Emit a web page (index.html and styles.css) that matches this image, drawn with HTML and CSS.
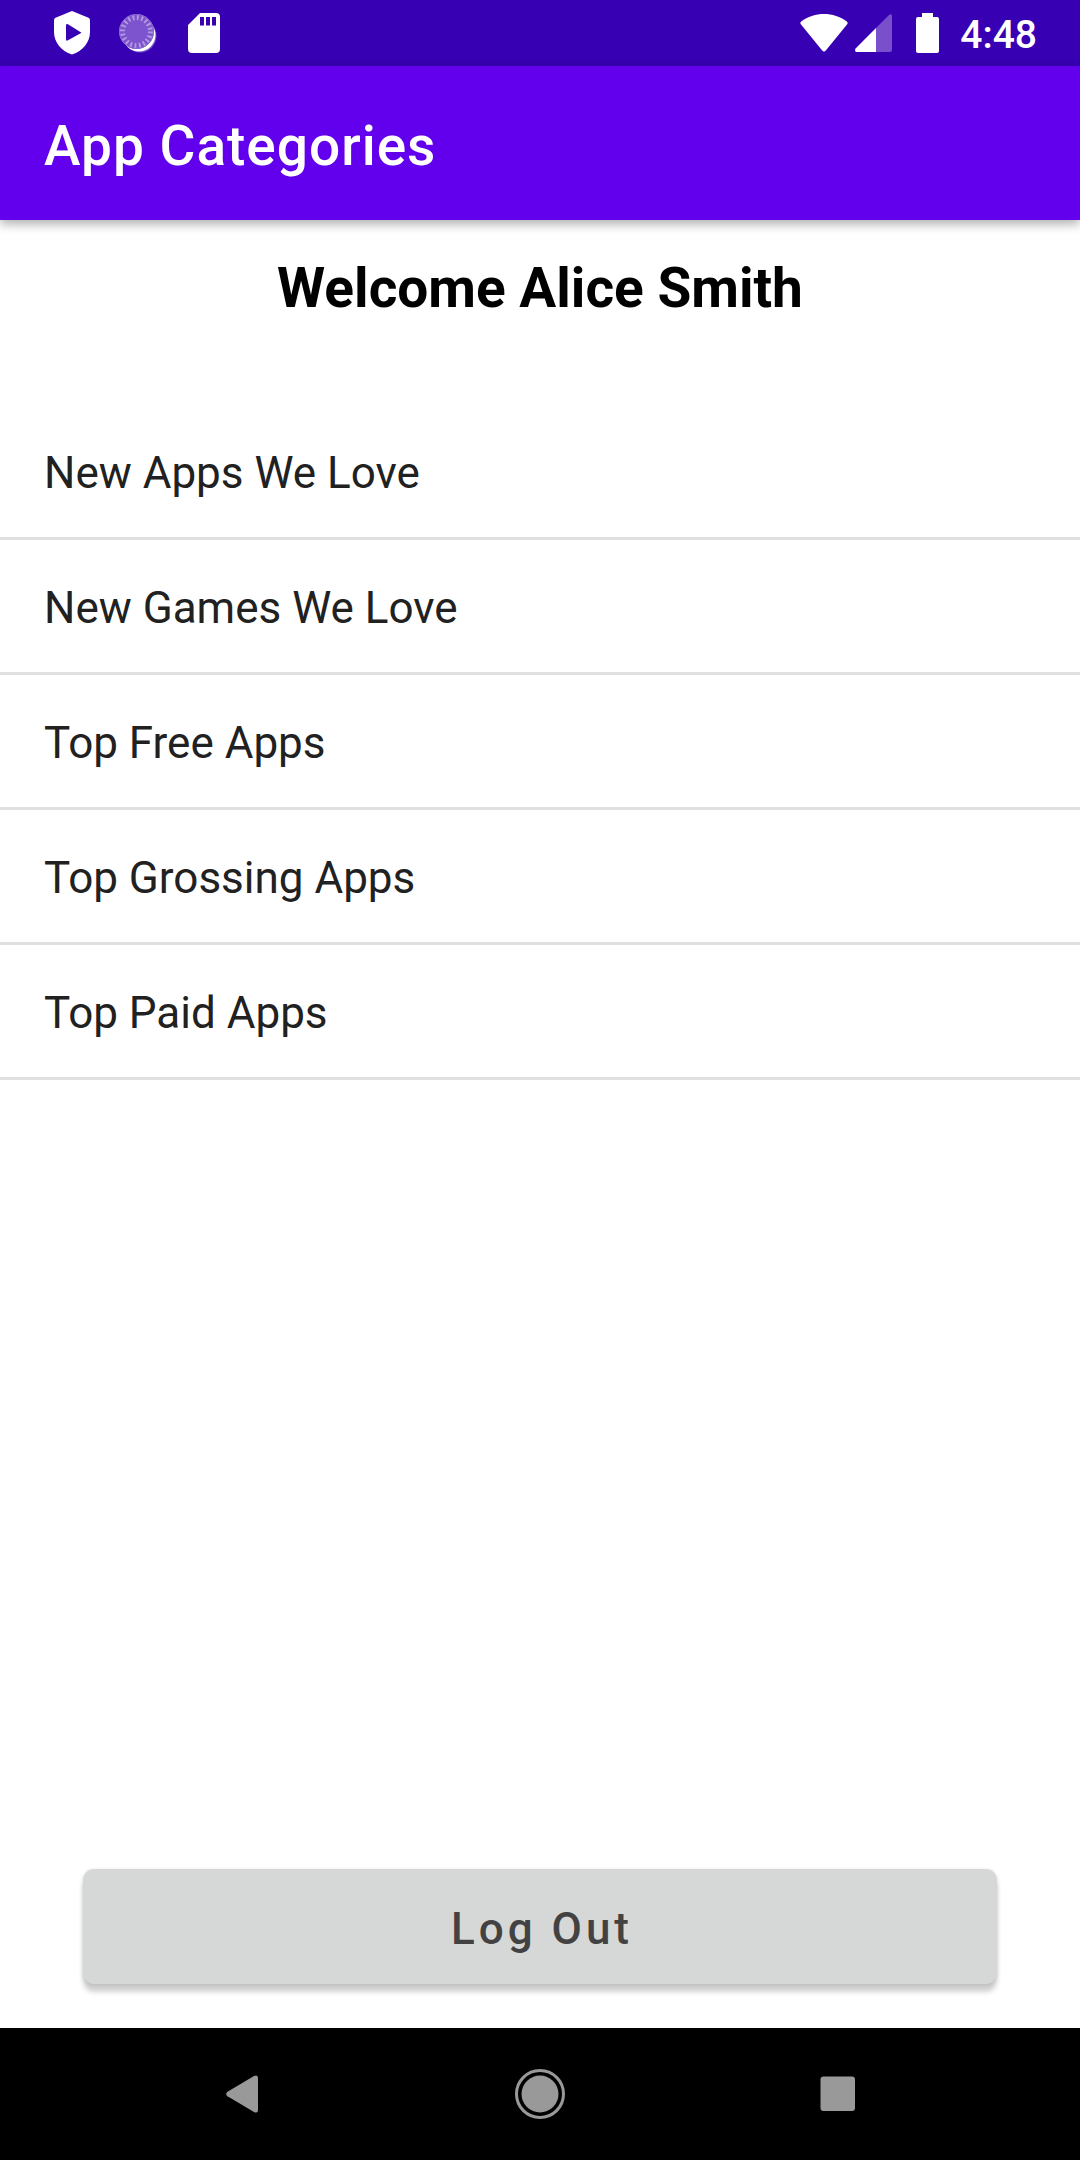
FILE: index.html
```
<!DOCTYPE html>
<html lang="en">
<head>
<meta charset="utf-8">
<meta name="viewport" content="width=device-width, initial-scale=1">
<title>App Categories</title>
<link rel="stylesheet" href="styles.css">
</head>
<body>
<div class="screen">
  <div class="status-bar">
    <div class="notifications">
      <svg width="36" height="44" viewBox="0 0 36 44" role="img" aria-label="Play Protect">
        <path fill="#fff" fill-rule="evenodd" d="M18 0 34.500 6.800Q36 7.500 36 9V21C36 31 29 40 18 43.500 7 40 0 31 0 21V9Q0 7.500 1.500 6.800ZM12 14.500V28Q12 30.500 14 29.300L27.500 21.800 14 13.300Q12 12.200 12 14.500Z"/>
      </svg>
      <svg width="42" height="40" viewBox="0 0 42 40" role="img" aria-label="Syncing">
        <circle cx="22" cy="23" r="16.500" fill="#fff" opacity=".3"/>
        <circle cx="21" cy="22" r="16.500" fill="#fff"/>
        <circle cx="18.500" cy="18.500" r="17.500" fill="#7d54cd"/>
        <circle cx="18.500" cy="18.500" r="14" fill="none" stroke="#b39be1" stroke-width="5" stroke-dasharray="1.800 2.598"/>
        <circle cx="18.500" cy="18.500" r="17" fill="none" stroke="#8b67d2"/>
      </svg>
      <svg width="32" height="40" viewBox="0 0 32 40" role="img" aria-label="SD card">
        <path fill="#fff" fill-rule="evenodd" d="M12 0H28Q32 0 32 4V36Q32 40 28 40H4Q0 40 0 36V12ZM12 4V12.500H16V4ZM18 4V12.500H22V4ZM24 4V12.500H28V4Z"/>
      </svg>
    </div>
    <div class="indicators">
      <svg width="48" height="38" viewBox="0 0 48 38" role="img" aria-label="Wi-Fi">
        <path fill="#fff" d="M1.200 7.500C14-2.500 34-2.500 46.800 7.500Q48.300 8.800 47.200 10.300L26 36.200Q24 38.800 22 36.200L.8 10.300Q-.3 8.800 1.200 7.500Z"/>
      </svg>
      <svg class="signal" width="37" height="38" viewBox="0 0 37 38" role="img" aria-label="Cellular signal">
        <path fill="#7a4fcb" d="M34 1Q37-.8 37 2.500V35.500Q37 38 34.500 38H21V14Z"/>
        <path fill="#fff" d="M21 14V38H1.500Q-1 37.500.8 34.200Z"/>
      </svg>
      <svg class="battery" width="23" height="40" viewBox="0 0 23 40" role="img" aria-label="Battery full">
        <path fill="#fff" d="M6 0H17V4H21Q23 4 23 6V38Q23 40 21 40H2Q0 40 0 38V6Q0 4 2 4H6Z"/>
      </svg>
      <time class="clock">4:48</time>
    </div>
  </div>
  <header class="app-bar">
    <h1 class="app-title">App Categories</h1>
  </header>
  <main class="content">
    <h2 class="welcome">Welcome Alice Smith</h2>
    <ul class="categories">
      <li><a class="category" href="#new-apps">New Apps We Love</a></li>
      <li><a class="category" href="#new-games">New Games We Love</a></li>
      <li><a class="category" href="#top-free">Top Free Apps</a></li>
      <li><a class="category" href="#top-grossing">Top Grossing Apps</a></li>
      <li><a class="category" href="#top-paid">Top Paid Apps</a></li>
    </ul>
    <button class="log-out" type="button">Log Out</button>
  </main>
  <nav class="nav-bar" aria-label="System">
    <button class="nav-button" type="button" aria-label="Back">
      <svg width="32" height="38" viewBox="0 0 32 38"><path fill="#999" d="M28 1Q32-.8 32 3V35Q32 38.800 28 37L1.500 21.300Q-1.200 19 1.500 16.700Z"/></svg>
    </button>
    <button class="nav-button" type="button" aria-label="Home">
      <svg width="50" height="50" viewBox="0 0 50 50"><circle cx="25" cy="25" r="23.500" fill="none" stroke="#999" stroke-width="3"/><circle cx="25" cy="25" r="18.500" fill="#999"/></svg>
    </button>
    <button class="nav-button" type="button" aria-label="Overview">
      <svg width="36" height="36" viewBox="0 0 36 36"><rect x=".5" y=".5" width="34.500" height="34.500" rx="3" fill="#999"/></svg>
    </button>
  </nav>
</div>
</body>
</html>
```
FILE: styles.css
```
* {
  box-sizing: border-box;
}

body {
  margin: 0;
  background: #fff;
  font-family: Roboto, "Liberation Sans", sans-serif;
}

svg {
  display: block;
  flex: none;
}

.screen {
  display: flex;
  flex-direction: column;
  min-height: 100vh;
}

.status-bar {
  display: flex;
  align-items: center;
  justify-content: space-between;
  height: 66px;
  padding: 0 43px 0 54px;
  background: #3700b3;
  color: #fff;
}

.notifications,
.indicators {
  display: flex;
  align-items: center;
}

.notifications {
  gap: 28px;
}

.signal {
  margin-left: 7px;
}

.battery {
  margin-left: 24px;
}

.clock {
  margin-left: 21px;
  padding-top: 3px;
  font-size: 39px;
  font-weight: 500;
  line-height: 44px;
}

.app-bar {
  position: relative;
  padding: 48px 44px 42px;
  background: #6200ee;
  box-shadow: 0 4px 10px rgba(0, 0, 0, .32);
  color: #fff;
}

.app-title {
  margin: 0;
  font-size: 55px;
  font-weight: 500;
  line-height: 64px;
  letter-spacing: 1px;
}

.content {
  display: flex;
  flex: 1;
  flex-direction: column;
  padding-bottom: 44px;
}

.welcome {
  margin: 36px 44px 85px;
  color: #000;
  font-size: 55px;
  font-weight: 700;
  line-height: 64px;
  text-align: center;
}

.categories {
  margin: 0;
  padding: 0;
  list-style: none;
}

.category {
  display: block;
  padding: 42px 44px 38px;
  border-bottom: 3px solid #e0e0e0;
  color: #212121;
  font-size: 44px;
  line-height: 52px;
  text-decoration: none;
}

.log-out {
  margin: auto 83px 0;
  padding: 34px 0 29px 4px;
  border: 0;
  border-radius: 11px;
  background: #d6d8d7;
  box-shadow: 0 8px 5px rgba(0, 0, 0, .18), 0 1px 4px rgba(0, 0, 0, .12);
  color: #424242;
  font: 500 44px/52px Roboto, "Liberation Sans", sans-serif;
  letter-spacing: 4px;
}

.nav-bar {
  display: grid;
  grid-template-columns: repeat(3, 1fr);
  height: 132px;
  padding: 0 93px;
  background: #000;
}

.nav-button {
  display: flex;
  align-items: center;
  justify-content: center;
  padding: 0;
  border: 0;
  background: none;
}
```
